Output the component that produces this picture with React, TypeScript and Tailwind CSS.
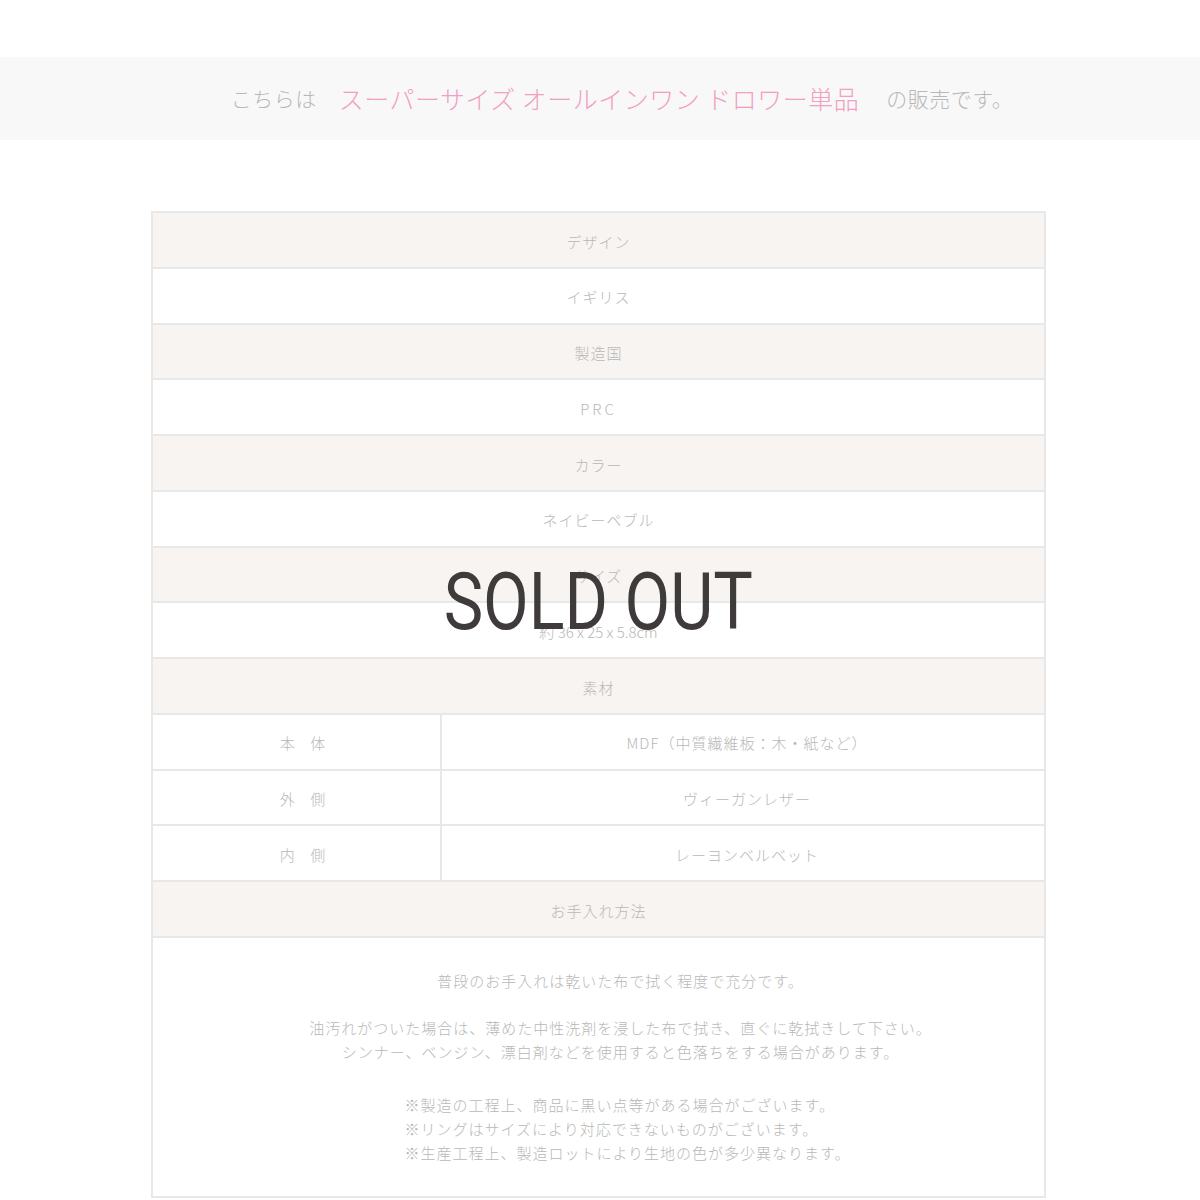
const jp = "font-['Noto_Sans_CJK_JP','Noto_Sans',sans-serif]";

const specRows: { label: string; head?: boolean; cls?: string }[] = [
  { label: 'デザイン', head: true },
  { label: 'イギリス' },
  { label: '製造国', head: true },
  { label: 'PRC', cls: 'tracking-[3px]' },
  { label: 'カラー', head: true },
  { label: 'ネイビーペブル' },
  { label: 'サイズ', head: true },
  { label: '約 36 x 25 x 5.8cm', cls: 'tracking-normal' },
  { label: '素材', head: true },
];

const materials = [
  { k: '本 体', v: 'MDF（中質繊維板：木・紙など）' },
  { k: '外 側', v: 'ヴィーガンレザー' },
  { k: '内 側', v: 'レーヨンベルベット' },
];

export default function App() {
  return (
    <div className={`min-h-[1200px] bg-white ${jp} font-light text-[#b8b8b8]`}>
      {/* banner */}
      <div className="pt-[57px]">
        <div className="h-[83px] bg-[#f8f8f8] flex items-center justify-center pl-[44px] text-[21px] tracking-[0.5px]">
          <span>こちらは</span>
          <span className="ml-[22px] text-[25px] text-[#f29fc2]">スーパーサイズ オールインワン ドロワー単品</span>
          <span className="ml-[27px]">の販売です。</span>
        </div>
      </div>

      {/* spec table */}
      <div className="relative mt-[71px] ml-[151px] w-[895px] border-2 border-[#e8e8e8] text-[15px] tracking-[1px]">
        {specRows.map((r, i) => (
          <div
            key={i}
            className={`h-[55.75px] pt-[4px] flex items-center justify-center border-b-2 border-[#e8e8e8] ${r.head ? 'bg-[#f7f4f2]' : 'bg-white'} ${r.cls ?? ''}`}
          >
            {r.label}
          </div>
        ))}
        {materials.map((m) => (
          <div key={m.k} className="h-[55.75px] flex border-b-2 border-[#e8e8e8]">
            <div className="w-[289px] pt-[4px] flex items-center justify-center pl-[18px] border-r-2 border-[#e8e8e8] tracking-[6px]">
              {m.k}
            </div>
            <div className="flex-1 pt-[4px] pl-[8px] flex items-center justify-center">{m.v}</div>
          </div>
        ))}
        <div className="h-[55.75px] pt-[4px] flex items-center justify-center bg-[#f7f4f2] border-b-2 border-[#e8e8e8]">
          お手入れ方法
        </div>
        <div className="pt-[31px] pb-[31px] pl-[44px] text-center leading-[24px]">
          <p>普段のお手入れは乾いた布で拭く程度で充分です。</p>
          <p className="mt-[23px]">油汚れがついた場合は、薄めた中性洗剤を浸した布で拭き、直ぐに乾拭きして下さい。</p>
          <p>シンナー、ベンジン、漂白剤などを使用すると色落ちをする場合があります。</p>
          <div className="mt-[29px] ml-[14px] inline-block text-left">
            <p>※製造の工程上、商品に黒い点等がある場合がございます。</p>
            <p>※リングはサイズにより対応できないものがございます。</p>
            <p>※生産工程上、製造ロットにより生地の色が多少異なります。</p>
          </div>
        </div>

        {/* sold out overlay */}
        <div className="absolute left-0 right-0 top-[349px] flex justify-center pointer-events-none">
          <span className="font-['Roboto',sans-serif] font-normal text-[80px] leading-none tracking-[0px] text-[#3f3b3a] scale-x-[0.83] inline-block">
            SOLD OUT
          </span>
        </div>
      </div>
    </div>
  );
}
